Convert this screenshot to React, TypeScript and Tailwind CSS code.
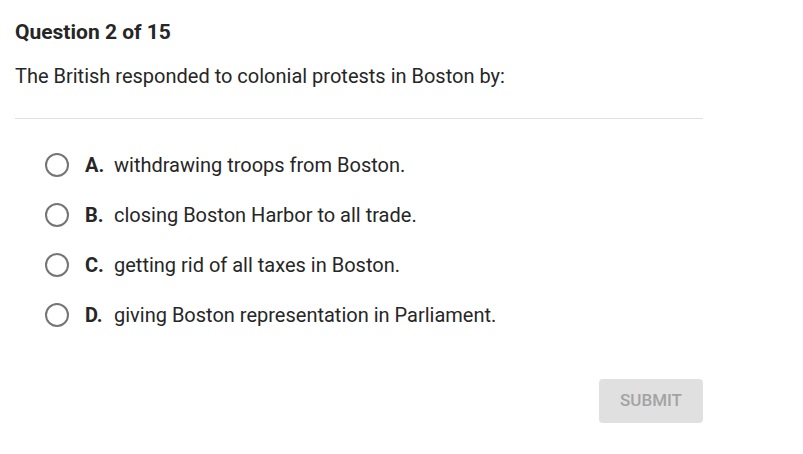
const options = [
  { letter: 'A.', text: 'withdrawing troops from Boston.' },
  { letter: 'B.', text: 'closing Boston Harbor to all trade.' },
  { letter: 'C.', text: 'getting rid of all taxes in Boston.' },
  { letter: 'D.', text: 'giving Boston representation in Parliament.' },
]

export default function App() {
  return (
    <div className="w-[803px] h-[454px] bg-white font-['Roboto',sans-serif] text-[#262626]">
      <div className="w-[688px] ml-[15px] pt-[17px]">
        {/* Header */}
        <h1 className="text-[21px] font-bold leading-[30px]">Question 2 of 15</h1>
        <p className="mt-[15px] text-[20px] leading-[28px]">
          The British responded to colonial protests in Boston by:
        </p>
        <div className="mt-[28px] border-t border-[#e0e0e0]" />

        {/* Options */}
        <div className="mt-[32px] flex flex-col gap-[22px] pl-[30px]">
          {options.map((o) => (
            <label key={o.letter} className="flex items-center h-[28px] cursor-pointer">
              <span className="w-[24px] h-[24px] rounded-full border-2 border-[#757575] shrink-0" />
              <span className="ml-[16px] text-[20px] font-bold w-[29px]">{o.letter}</span>
              <span className="text-[20px]">{o.text}</span>
            </label>
          ))}
        </div>

        {/* Submit */}
        <div className="mt-[50px] flex justify-end">
          <button className="w-[104px] h-[44px] rounded-[4px] bg-[#e0e0e0] text-[#a3a3a3] text-[17px] font-medium">
            SUBMIT
          </button>
        </div>
      </div>
    </div>
  )
}
